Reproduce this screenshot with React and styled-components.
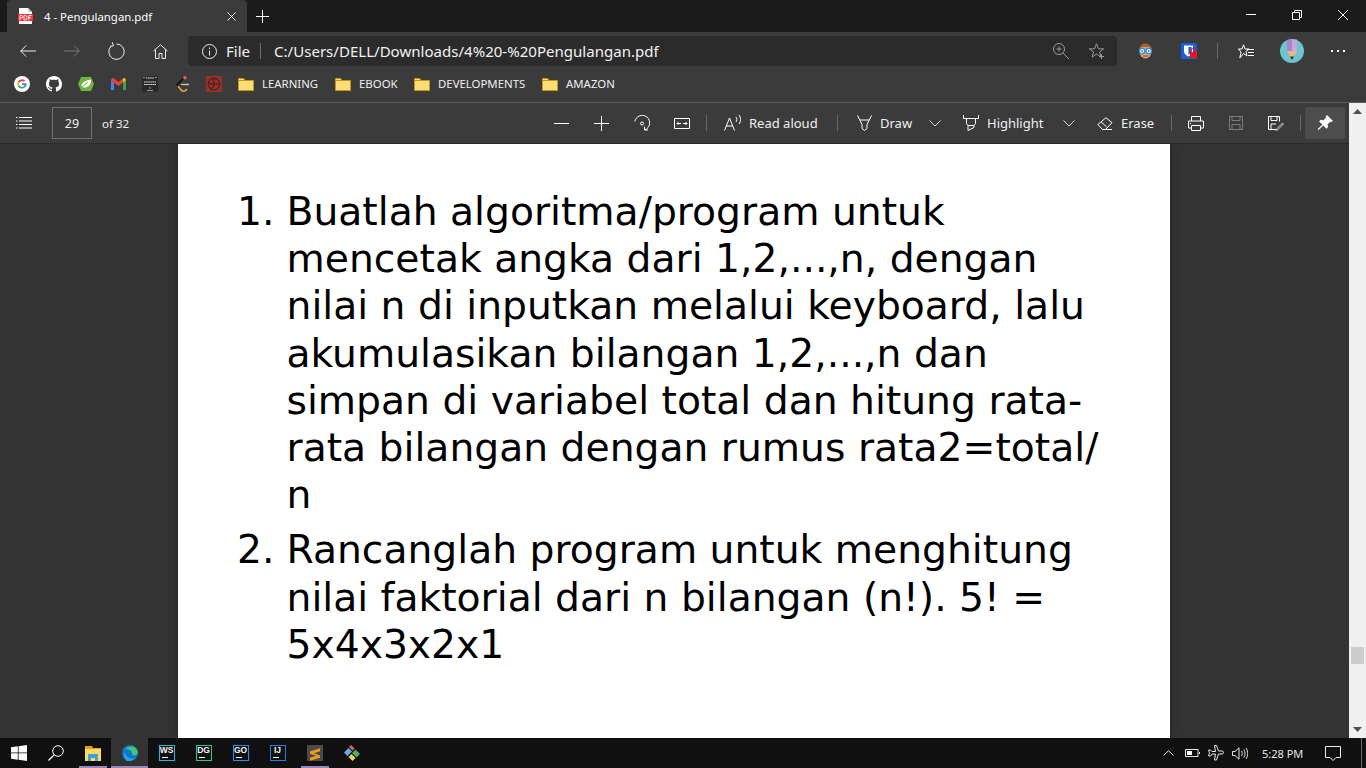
import React from "react"
import styled, { createGlobalStyle } from "styled-components"

const GlobalStyle = createGlobalStyle`
  html, body {
    margin: 0;
    padding: 0;
    height: 100%;
    overflow: hidden;
    background: #333;
  }
  * { box-sizing: border-box; }
`

const Screen = styled.div`
  width: 1366px;
  height: 768px;
  display: flex;
  flex-direction: column;
  overflow: hidden;
  font-family: "Noto Sans", "Open Sans", sans-serif;
  color: #fff;
`

const Glyph = styled.svg`
  display: block;
  flex: none;
  fill: none;
  stroke: ${props => props.$stroke || "#fff"};
  stroke-width: 1;
`

/* title strip */
const TitleBar = styled.div`
  height: 32px;
  flex: none;
  display: flex;
  align-items: stretch;
  padding-left: 7px;
  background: #1b1b1b;
`
const Tab = styled.div`
  width: 240px;
  display: flex;
  align-items: center;
  padding-left: 11px;
  background: #3b3b3b;
  border-radius: 4px 4px 0 0;
  font-size: 11.4px;
`
const TabTitle = styled.span`
  margin-left: 11px;
  flex: 1;
  white-space: nowrap;
`
const TabClose = styled.div`
  width: 32px;
  display: flex;
  justify-content: center;
`
const NewTab = styled.div`
  width: 30px;
  display: flex;
  align-items: center;
  justify-content: center;
`
const WindowControls = styled.div`
  margin-left: auto;
  display: flex;
  height: 29px;
`
const WindowButton = styled.div`
  width: 46px;
  display: flex;
  align-items: center;
  justify-content: center;
`

/* navigation row */
const NavBar = styled.div`
  height: 38px;
  flex: none;
  display: flex;
  align-items: center;
  padding: 0 6px;
  background: #3b3b3b;
`
const NavButton = styled.div`
  width: ${props => props.$w || 44}px;
  height: 30px;
  flex: none;
  display: flex;
  align-items: center;
  justify-content: center;
`
const AddressBar = styled.div`
  flex: 1;
  height: 30px;
  margin: 0 6px;
  display: flex;
  align-items: center;
  padding-left: 14px;
  background: #2b2b2b;
  border-radius: 4px;
  font-size: 15.05px;
  white-space: nowrap;
`
const AddressScheme = styled.span`
  margin-left: 9px;
  color: #f2f2f2;
`
const AddressDivider = styled.span`
  width: 1px;
  height: 16px;
  margin: 0 13px 0 10px;
  background: #6d6d6d;
`
const AddressUrl = styled.span`
  flex: 1;
  color: #f2f2f2;
`
const AddressAction = styled.div`
  width: 36px;
  display: flex;
  justify-content: center;
  &:last-child { margin-right: 2px; }
`
const NavDivider = styled.span`
  width: 1px;
  height: 16px;
  margin: 0 6px;
  background: #666;
  flex: none;
`

/* bookmarks */
const BookmarkBar = styled.div`
  height: 32px;
  flex: none;
  display: flex;
  align-items: center;
  padding: 0 0 4px 6px;
  background: #3b3b3b;
`
const BookmarkIcon = styled.div`
  width: 32px;
  display: flex;
  justify-content: center;
`
const FolderList = styled.div`
  display: flex;
  margin-left: 8px;
`
const BookmarkFolder = styled.div`
  width: ${props => props.$w}px;
  display: flex;
  align-items: center;
  gap: 8px;
  font-size: 11.4px;
  line-height: 13px;
  color: #f0f0f0;
  white-space: nowrap;
`
const FolderName = styled.span`
  margin-top: -1px;
`

/* everything under the bookmarks */
const Workspace = styled.div`
  flex: 1;
  min-height: 0;
  display: flex;
  border-top: 1px solid #5e5e5e;
`
const ReaderColumn = styled.div`
  flex: 1;
  min-width: 0;
  display: flex;
  flex-direction: column;
`
const PdfToolbar = styled.div`
  height: 41px;
  flex: none;
  display: flex;
  align-items: center;
  padding: 0 4px;
  background: #3b3b3b;
  border-bottom: 1px solid #2c2c2c;
  font-size: 13px;
  color: #f0f0f0;
  white-space: nowrap;
`
const ToolButton = styled.div`
  width: 40px;
  height: 32px;
  flex: none;
  display: flex;
  align-items: center;
  justify-content: center;
  border-radius: 2px;
  background: ${props => (props.$active ? "#4d4d4d" : "transparent")};
`
const PageInput = styled.div`
  width: 40px;
  height: 32px;
  margin-left: 8px;
  display: flex;
  align-items: center;
  justify-content: center;
  border: 1px solid #6f6f6f;
  font-size: 12.5px;
`
const PageCount = styled.span`
  margin-left: 10px;
  font-size: 11.5px;
`
const ToolGroup = styled.div`
  margin-left: auto;
  display: flex;
  align-items: center;
`
const ToolDivider = styled.span`
  width: 1px;
  height: 16px;
  margin: 0 4px;
  background: #666;
  flex: none;
`
const TextTool = styled.div`
  width: ${props => props.$w}px;
  height: 32px;
  flex: none;
  display: flex;
  align-items: center;
  padding-left: ${props => props.$pad}px;
  gap: 4px;
`
const ToolIconBox = styled.div`
  width: 24px;
  display: flex;
  justify-content: center;
`

const Viewer = styled.main`
  flex: 1;
  min-height: 0;
  overflow: hidden;
  display: flex;
  justify-content: center;
  background: #333;
`
const Page = styled.article`
  width: 992px;
  margin-right: 1px;
  padding: 44px 60px 0 59px;
  background: #fff;
  box-shadow: 0 0 9px rgba(0, 0, 0, 0.35);
  color: #000;
  font-family: "DejaVu Sans", sans-serif;
  font-size: 39.25px;
  line-height: 47.2px;
`
const Question = styled.div`
  display: flex;
  margin-bottom: 8px;
`
const QuestionNumber = styled.span`
  width: 49.5px;
  flex: none;
`
const Line = styled.div`
  white-space: nowrap;
`

const ScrollBar = styled.div`
  width: 17px;
  flex: none;
  display: flex;
  flex-direction: column;
  align-items: center;
  background: #f0f0f0;
`
const ScrollArrow = styled.div`
  width: 17px;
  height: 17px;
  flex: none;
  display: flex;
  align-items: center;
  justify-content: center;
`
const ScrollTrack = styled.div`
  flex: 1;
`
const ScrollThumb = styled.div`
  width: 13px;
  height: 17px;
  margin-top: ${props => props.$top}px;
  background: #cdcdcd;
`

/* windows taskbar */
const TaskBar = styled.footer`
  height: 30px;
  flex: none;
  display: flex;
  align-items: stretch;
  background: #101010;
`
const TaskCell = styled.div`
  position: relative;
  width: 37px;
  display: flex;
  align-items: center;
  justify-content: center;
  background: ${props => (props.$active ? "#333" : "transparent")};
  &::after {
    content: "";
    display: ${props => (props.$open ? "block" : "none")};
    position: absolute;
    left: ${props => (props.$active ? 0 : 5)}px;
    right: ${props => (props.$active ? 0 : 4)}px;
    bottom: 0;
    height: 2px;
    background: #9a86b4;
  }
`
const JetBadge = styled.div`
  width: 16px;
  height: 16px;
  border: 1px solid ${props => props.$color};
  background: #111;
  font-family: "Liberation Sans", sans-serif;
  font-size: 8.5px;
  font-weight: 700;
  line-height: 9px;
  text-align: center;
  color: #f4f4f4;
  &::after {
    content: "";
    display: block;
    width: 6px;
    height: 1px;
    margin: 2px 0 0 2px;
    background: #fff;
  }
`
const Tray = styled.div`
  margin-left: auto;
  display: flex;
  align-items: center;
`
const TrayIcon = styled.div`
  width: 24px;
  display: flex;
  justify-content: center;
`
const Clock = styled.span`
  width: 41px;
  margin: 0 10px;
  font-size: 11px;
  color: #e6e6e6;
  white-space: nowrap;
`
const Notify = styled.div`
  width: 40px;
  display: flex;
  justify-content: center;
`
const ShowDesktop = styled.div`
  width: 13px;
  height: 100%;
  &::after {
    content: "";
    display: block;
    width: 1px;
    height: 100%;
    margin-left: 8px;
    background: #6b6b6b;
  }
`

const Folder = () => (
  <Glyph width="16" height="13" viewBox="0 0 16 13">
    <path d="M.5 2.500V.5h5l1.500 2h8.500v10H.5z" fill="#ffdc7a" stroke="#c8950f" />
    <path d="M1 2.500h6" stroke="#c8950f" />
  </Glyph>
)

const Chevron = () => (
  <Glyph width="12" height="7" viewBox="0 0 12 7" $stroke="#d8d8d8">
    <path d="M.5.5 6 6 11.500.5" />
  </Glyph>
)

const folders = [
  { name: "LEARNING", w: 97 },
  { name: "EBOOK", w: 79 },
  { name: "DEVELOPMENTS", w: 128 },
  { name: "AMAZON", w: 90 },
]

const questions = [
  {
    n: "1.",
    lines: [
      "Buatlah algoritma/program untuk",
      "mencetak angka dari 1,2,...,n, dengan",
      "nilai n di inputkan melalui keyboard, lalu",
      "akumulasikan bilangan 1,2,...,n dan",
      "simpan di variabel total dan hitung rata-",
      "rata bilangan dengan rumus rata2=total/",
      "n",
    ],
  },
  {
    n: "2.",
    lines: [
      "Rancanglah program untuk menghitung",
      "nilai faktorial dari n bilangan (n!). 5! =",
      "5x4x3x2x1",
    ],
  },
]

const jetApps = [
  { label: "WS", color: "#22b8e6" },
  { label: "DG", color: "#22c88f" },
  { label: "GO", color: "#1e90ff" },
  { label: "IJ", color: "#1e7fe8" },
]

const App = () => (
  <Screen>
    <GlobalStyle />
    <TitleBar>
      <Tab>
        <Glyph width="15" height="16" viewBox="0 0 15 16">
          <path d="M1 0h9l4 4v12H1z" fill="#fff" stroke="none" />
          <path d="M10 0v4h4z" fill="#ccc" stroke="none" />
          <rect y="6" width="15" height="7" fill="#e8383b" stroke="none" />
          <path d="M2 12V7.500h1.600a1 1 0 010 2.400H2M6 7.500v4.500h1.200a1.800 2.200 0 000-4.500zM10.800 12V7.500h2.700M10.800 9.600h2.200" stroke="#fff" strokeWidth=".9" />
        </Glyph>
        <TabTitle>4 - Pengulangan.pdf</TabTitle>
        <TabClose>
          <Glyph width="9" height="9" viewBox="0 0 9 9" strokeWidth="1.2">
            <path d="M.5.5l8 8M8.500.5l-8 8" />
          </Glyph>
        </TabClose>
      </Tab>
      <NewTab>
        <Glyph width="13" height="13" viewBox="0 0 13 13">
          <path d="M6.500 0v13M0 6.500h13" />
        </Glyph>
      </NewTab>
      <WindowControls>
        <WindowButton>
          <Glyph width="10" height="1" viewBox="0 0 10 1"><path d="M0 .5h10" /></Glyph>
        </WindowButton>
        <WindowButton>
          <Glyph width="10" height="10" viewBox="0 0 10 10">
            <path d="M.5 2.500h7v7h-7zM2.500 2.500v-2h7v7h-2" />
          </Glyph>
        </WindowButton>
        <WindowButton>
          <Glyph width="10" height="10" viewBox="0 0 10 10"><path d="M0 0l10 10M10 0L0 10" /></Glyph>
        </WindowButton>
      </WindowControls>
    </TitleBar>

    <NavBar>
      <NavButton>
        <Glyph width="16" height="12" viewBox="0 0 16 12" $stroke="#eee"><path d="M16 6H.7M6.200.5.700 6l5.500 5.500" /></Glyph>
      </NavButton>
      <NavButton>
        <Glyph width="16" height="12" viewBox="0 0 16 12" $stroke="#777"><path d="M0 6h15.300M9.800.5 15.300 6l-5.500 5.500" /></Glyph>
      </NavButton>
      <NavButton>
        <Glyph width="17" height="18" viewBox="0 0 17 18" $stroke="#eee">
          <path d="M8.500 2a7.700 7.700 0 1 1-5.600 2.400" />
          <path d="M4.300.3 5.500 3.800M5.500 3.800l-3.500.6" />
        </Glyph>
      </NavButton>
      <NavButton>
        <Glyph width="15" height="15" viewBox="0 0 15 15" $stroke="#eee">
          <path d="M.5 7 7.500.7 14.500 7M2.500 5.500v9h3.500V9.500h3v5h3.500v-9" />
        </Glyph>
      </NavButton>
      <AddressBar>
        <Glyph width="15" height="15" viewBox="0 0 15 15" $stroke="#eee">
          <circle cx="7.500" cy="7.500" r="7" />
          <path d="M7.500 6.500v5M7.500 3.500v1.500" />
        </Glyph>
        <AddressScheme>File</AddressScheme>
        <AddressDivider />
        <AddressUrl>C:/Users/DELL/Downloads/4%20-%20Pengulangan.pdf</AddressUrl>
        <AddressAction>
          <Glyph width="16" height="16" viewBox="0 0 16 16" $stroke="#999">
            <circle cx="6" cy="6" r="5.500" />
            <path d="M3.500 6h5M6 3.500v5M10 10l6 6" />
          </Glyph>
        </AddressAction>
        <AddressAction>
          <Glyph width="16" height="16" viewBox="0 0 16 16" $stroke="#999">
            <path d="M7.500.8l2 5h5.200l-4.200 3.200 1.600 5.200-4.600-3.200-4.400 3.200L4.500 9 .4 5.800h5.200z" />
            <path d="M12.500 11v5M10 13.500h5" />
          </Glyph>
        </AddressAction>
      </AddressBar>
      <NavButton>
        <Glyph width="15" height="16" viewBox="0 0 15 16">
          <ellipse cx="7.500" cy="8.500" rx="6" ry="7" fill="#dba27a" stroke="none" />
          <path d="M1.500 7C1 3 4 .5 7.500.5S14 3 13.500 7L11 4H4z" fill="#a5622c" stroke="none" />
          <circle cx="4.200" cy="8" r="2.700" fill="#f4f8fc" stroke="#2b8de0" strokeWidth="1.300" />
          <circle cx="10.800" cy="8" r="2.700" fill="#f4f8fc" stroke="#2b8de0" strokeWidth="1.300" />
          <circle cx="4.200" cy="8" r=".8" fill="#333" stroke="none" />
          <circle cx="10.800" cy="8" r=".8" fill="#333" stroke="none" />
          <path d="M5 13h5" stroke="#8a4a20" />
        </Glyph>
      </NavButton>
      <NavButton>
        <Glyph width="16" height="16" viewBox="0 0 16 16">
          <rect width="16" height="16" rx="1.500" fill="#175ddc" stroke="none" />
          <path d="M3 2.500h9v6c0 2.500-2.500 4-4.500 5-2-1-4.500-2.500-4.500-5z" fill="#fff" stroke="none" />
          <path d="M7.500 4h3v4.500c0 1.500-1.500 2.500-3 3.300z" fill="#175ddc" stroke="none" />
          <path d="M10 9V7.500a2 2 0 014 0V9" stroke="#f01422" strokeWidth="1.200" />
          <rect x="9" y="9" width="7" height="6" fill="#f01422" stroke="none" />
        </Glyph>
      </NavButton>
      <NavDivider />
      <NavButton>
        <Glyph width="16" height="15" viewBox="0 0 16 15">
          <path d="M5.500.8 7 5H11L8 7.500 9 12 5.500 9.500 1.800 14 3 8 .3 5h3.700z" />
          <path d="M9 5.500h7M10 8.500h6M10 11.500h6" />
        </Glyph>
      </NavButton>
      <NavButton $w={48}>
        <Glyph width="24" height="24" viewBox="0 0 24 24">
          <circle cx="12" cy="12" r="12" fill="#6cc5cf" stroke="none" />
          <path d="M7 .8h5V12H7z" fill="#a886c8" stroke="none" />
          <path d="M12 .5h5V12h-5z" fill="#c5a8dc" stroke="none" />
          <path d="M7 12h10l-5 9z" fill="#e8b58c" stroke="none" />
          <path d="M10 17.500h4l-2 3.500z" fill="#33312f" stroke="none" />
        </Glyph>
      </NavButton>
      <NavButton>
        <Glyph width="14" height="2" viewBox="0 0 14 2">
          <path d="M0 0h2v2H0zM6 0h2v2H6zM12 0h2v2h-2z" fill="#fff" stroke="none" />
        </Glyph>
      </NavButton>
    </NavBar>

    <BookmarkBar>
      <BookmarkIcon>
        <Glyph width="16" height="16" viewBox="0 0 16 16">
          <circle cx="8" cy="8" r="8" fill="#fff" stroke="none" />
          <path d="M8 3.200a4.800 4.800 0 013.200 1.200L9.900 5.700A3 3 0 005.200 7L3.800 5.800A4.800 4.800 0 018 3.200z" fill="#ea4335" stroke="none" />
          <path d="M3.800 5.800 5.200 7a3 3 0 000 2L3.800 10.200a4.800 4.800 0 010-4.400z" fill="#fbbc05" stroke="none" />
          <path d="M3.800 10.200 5.200 9a3 3 0 004.400 1.500l1.300 1.100A4.800 4.800 0 013.800 10.200z" fill="#34a853" stroke="none" />
          <path d="M8 7.200h4.600c.3 1.700-.3 3.300-1.700 4.400L9.600 10.500c.5-.4.800-.8 1-1.500H8z" fill="#4285f4" stroke="none" />
        </Glyph>
      </BookmarkIcon>
      <BookmarkIcon>
        <Glyph width="16" height="16" viewBox="0 0 16 16">
          <path fill="#fff" stroke="none" d="M8 0C3.580 0 0 3.580 0 8c0 3.540 2.290 6.530 5.470 7.590.4.070.55-.17.55-.38 0-.19-.01-.82-.01-1.490-2.010.37-2.530-.49-2.690-.94-.09-.23-.48-.94-.82-1.130-.28-.15-.68-.52-.01-.53.63-.01 1.080.58 1.230.82.720 1.210 1.870.870 2.330.660.070-.520.280-.870.510-1.070-1.780-.2-3.640-.890-3.640-3.950 0-.870.310-1.590.820-2.150-.080-.2-.360-1.020.080-2.120 0 0 .670-.210 2.200.820.640-.180 1.320-.270 2-.270s1.360.090 2 .270c1.530-1.040 2.200-.820 2.200-.820.440 1.100.160 1.920.080 2.120.510.560.820 1.270.820 2.150 0 3.070-1.870 3.750-3.650 3.950.290.250.540.730.540 1.480 0 1.070-.010 1.930-.010 2.200 0 .210.150.460.550.380A8.013 8.013 0 0016 8c0-4.420-3.580-8-8-8z" />
        </Glyph>
      </BookmarkIcon>
      <BookmarkIcon>
        <Glyph width="16" height="16" viewBox="0 0 16 16">
          <path d="M3 1h10l3 7-3 7H3L0 8z" fill="#6db33f" stroke="none" />
          <path d="M13 3.500c.5 4-1.500 7.500-6 8-1.500.1-3-.5-3.500-1 0-3.500 3-6 9.500-7z" fill="#fff" stroke="none" />
          <path d="M4 11 10 6" stroke="#6db33f" />
        </Glyph>
      </BookmarkIcon>
      <BookmarkIcon>
        <Glyph width="15" height="12" viewBox="0 0 15 12">
          <path d="M0 2.500V12h3V4.500z" fill="#4285f4" stroke="none" />
          <path d="M12 4.500V12h3V2.500z" fill="#34a853" stroke="none" />
          <path d="M0 2.500C0 .5 2 -.5 3 .5L7.500 4 12 .5l0 4L7.500 8 0 2.500z" fill="#ea4335" stroke="none" />
          <path d="M12 .5c1-1 3 0 3 2l-3 2z" fill="#fbbc05" stroke="none" />
        </Glyph>
      </BookmarkIcon>
      <BookmarkIcon>
        <Glyph width="16" height="16" viewBox="0 0 16 16">
          <rect width="16" height="16" fill="#2a2a2a" stroke="none" />
          <path d="M4 2h8M2 2v-1M14 2v-1M2 6h12M2 8.500h12" stroke="#dedede" strokeWidth="1.200" strokeDasharray="1.600 .5" />
          <path d="M7 12h2M5 14.500h6" stroke="#999" />
        </Glyph>
      </BookmarkIcon>
      <BookmarkIcon>
        <Glyph width="14" height="16" viewBox="0 0 14 16">
          <circle cx="10" cy="1.800" r="1.700" fill="#ef5a4a" stroke="none" />
          <path d="M8 3 2 8.500l2.500 3" stroke="#0c0c0c" strokeWidth="1.600" />
          <path d="M3 10l4 5h3l2-2" stroke="#f0a53a" strokeWidth="1.600" />
          <path d="M6 8.500h8" stroke="#c4c4c4" strokeWidth="1.400" />
        </Glyph>
      </BookmarkIcon>
      <BookmarkIcon>
        <Glyph width="16" height="16" viewBox="0 0 16 16">
          <rect width="16" height="16" fill="#96302a" stroke="none" />
          <circle cx="8" cy="8" r="5.800" stroke="#54201d" strokeWidth="1.200" />
          <path d="M8 8C6.500 6 7 3.500 9.500 2.500M8 8c2.300-1 4.700 0 5.500 2.300M8 8c.3 2.500-1.500 4.500-4 4.800M8 8C5.800 9 3.300 8 2.500 5.700" stroke="#54201d" strokeWidth="1.200" />
        </Glyph>
      </BookmarkIcon>
      <FolderList>
        {folders.map(folder => (
          <BookmarkFolder key={folder.name} $w={folder.w}>
            <Folder />
            <FolderName>{folder.name}</FolderName>
          </BookmarkFolder>
        ))}
      </FolderList>
    </BookmarkBar>

    <Workspace>
      <ReaderColumn>
        <PdfToolbar>
          <ToolButton>
            <Glyph width="16" height="12" viewBox="0 0 16 12">
              <path d="M0 .5h1.500M0 4h1.500M0 7.500h1.500M0 11h1.500M3 .5h13M3 4h13M3 7.500h13M3 11h13" />
            </Glyph>
          </ToolButton>
          <PageInput>29</PageInput>
          <PageCount>of 32</PageCount>
          <ToolGroup>
            <ToolButton>
              <Glyph width="16" height="1" viewBox="0 0 16 1"><path d="M0 .5h15" /></Glyph>
            </ToolButton>
            <ToolButton>
              <Glyph width="16" height="15" viewBox="0 0 16 15"><path d="M7.500 0v15M0 7.500h15" /></Glyph>
            </ToolButton>
            <ToolButton>
              <Glyph width="16" height="16" viewBox="0 0 16 16">
                <path d="M.8 6.500A7.500 7.500 0 1 1 11 14.800M10.500 11.500v3.500h3.500" />
                <circle cx="8" cy="8.500" r="1.500" />
              </Glyph>
            </ToolButton>
            <ToolButton>
              <Glyph width="16" height="11" viewBox="0 0 16 11">
                <path d="M.5.500h15v10H.5zM3 5.500h4M9 5.500h4" />
                <path d="M4.500 4 3 5.500 4.500 7M11.500 4 13 5.500 11.500 7" />
              </Glyph>
            </ToolButton>
            <ToolDivider />
            <TextTool $w={122} $pad={10}>
              <ToolIconBox>
                <Glyph width="18" height="16" viewBox="0 0 18 16">
                  <path d="M.5 15.500 5.500 3l5 12.500M2.300 11h6.500M12 2c1 1.500 1 3.500 0 5M15 0c2 2.500 2 6.500 0 9" />
                </Glyph>
              </ToolIconBox>
              <span>Read aloud</span>
            </TextTool>
            <ToolDivider />
            <TextTool $w={73} $pad={10}>
              <ToolIconBox>
                <Glyph width="15" height="16" viewBox="0 0 15 16">
                  <path d="M.5.500 5 9.500v4l2.500 2 2.500-2v-4L14.500.500M3 5h9" />
                </Glyph>
              </ToolIconBox>
              <span>Draw</span>
            </TextTool>
            <ToolButton><Chevron /></ToolButton>
            <TextTool $w={94} $pad={4}>
              <ToolIconBox>
                <Glyph width="16" height="16" viewBox="0 0 16 16">
                  <path d="M.5 0v3.500h15V0M3.500 3.500v5l1.500 2v5l6-3v-2l1.500-2v-5M5 10.500h6" />
                </Glyph>
              </ToolIconBox>
              <span>Highlight</span>
            </TextTool>
            <ToolButton><Chevron /></ToolButton>
            <TextTool $w={78} $pad={4}>
              <ToolIconBox>
                <Glyph width="16" height="13" viewBox="0 0 16 13">
                  <path d="M.8 7.500 9 .7l6 5-6.500 6.800H5.500zM4 4.800l5.500 5M5.500 12.500H15" />
                </Glyph>
              </ToolIconBox>
              <span>Erase</span>
            </TextTool>
            <ToolDivider />
            <ToolButton>
              <Glyph width="16" height="15" viewBox="0 0 16 15">
                <path d="M3.500 5V.5h9V5M3.500 12H.5V5h15v7h-3M3.500 9.500h9v5h-9zM2 7.500h1" />
              </Glyph>
            </ToolButton>
            <ToolButton>
              <Glyph width="14" height="14" viewBox="0 0 14 14" $stroke="#7c7c7c">
                <path d="M.5.500h13v13H.5zM3 .5v4h8v-4M3 13.500v-5h8v5" />
              </Glyph>
            </ToolButton>
            <ToolButton>
              <Glyph width="16" height="15" viewBox="0 0 16 15">
                <path d="M8 13.500H.5V.5h11v5M3 .5v4h6v-4M3 13v-5h5" />
                <path d="M9.500 14 15.500 8l-1-1-6 6-.5 1.500z" stroke="#ccc" />
              </Glyph>
            </ToolButton>
            <ToolDivider />
            <ToolButton $active>
              <Glyph width="16" height="16" viewBox="0 0 16 16">
                <path d="M10 .5 15.500 6l-1.200.8-1-.5-3 3 .2 3-1.200 1L6.200 10 1.500 14.800l-.5-.5L5.800 9.600 2.500 6.500l1-1.200 3 .2 3-3-.5-1z" fill="#fff" stroke="#fff" strokeWidth=".8" />
              </Glyph>
            </ToolButton>
          </ToolGroup>
        </PdfToolbar>
        <Viewer>
          <Page>
            {questions.map(q => (
              <Question key={q.n}>
                <QuestionNumber>{q.n}</QuestionNumber>
                <div>
                  {q.lines.map(line => (
                    <Line key={line}>{line}</Line>
                  ))}
                </div>
              </Question>
            ))}
          </Page>
        </Viewer>
      </ReaderColumn>
      <ScrollBar>
        <ScrollArrow>
          <Glyph width="9" height="5" viewBox="0 0 9 5">
            <path d="M4.500 0 9 5H0z" fill="#505050" stroke="none" />
          </Glyph>
        </ScrollArrow>
        <ScrollTrack>
          <ScrollThumb $top={527} />
        </ScrollTrack>
        <ScrollArrow>
          <Glyph width="9" height="5" viewBox="0 0 9 5">
            <path d="M0 0h9L4.500 5z" fill="#505050" stroke="none" />
          </Glyph>
        </ScrollArrow>
      </ScrollBar>
    </Workspace>

    <TaskBar>
      <TaskCell>
        <Glyph width="16" height="16" viewBox="0 0 16 16">
          <path d="M0 2.300 6.800 1.300V7.500H0zM7.600 1.200 16 0V7.500H7.600zM0 8.300H6.800V14.700L0 13.700zM7.600 8.300H16V16L7.600 14.800z" fill="#fff" stroke="none" />
        </Glyph>
      </TaskCell>
      <TaskCell>
        <Glyph width="16" height="16" viewBox="0 0 16 16">
          <circle cx="10" cy="6" r="5.300" />
          <path d="M6.200 9.800.5 15.500" strokeWidth="1.300" />
        </Glyph>
      </TaskCell>
      <TaskCell $open>
        <Glyph width="16" height="16" viewBox="0 0 16 16">
          <path d="M0 1h7l1 2h8v3H0z" fill="#e0a11a" stroke="none" />
          <path d="M0 4h16v12H0z" fill="#ffd866" stroke="none" />
          <path d="M3 9h10v7h-3v-3H6v3H3z" fill="#3aa3d8" stroke="none" />
        </Glyph>
      </TaskCell>
      <TaskCell $open $active>
        <Glyph width="16" height="16" viewBox="0 0 16 16">
          <circle cx="8" cy="8" r="8" fill="#1173c9" stroke="none" />
          <path d="M3 5c2-4 8-4.500 11-1.500 2 2 2.500 5 .5 6.500-2 1-4.500.5-4.500-1.500C10 6 6 3 3 5z" fill="#3ec77a" stroke="none" />
          <path d="M5 16c-3-2-4-6-2-9 0 3 3 6 6 6.500 2 .3 3.500 0 4-1-1 2-5 5-8 3.500z" fill="#27a5e8" stroke="none" />
        </Glyph>
      </TaskCell>
      {jetApps.map(app => (
        <TaskCell key={app.label}>
          <JetBadge $color={app.color}>{app.label}</JetBadge>
        </TaskCell>
      ))}
      <TaskCell $open>
        <Glyph width="16" height="16" viewBox="0 0 16 16">
          <rect width="16" height="16" fill="#4a4a4a" stroke="none" />
          <path d="M3 6.500 13 3.300v3L7 8.200l6 2.200v2.300L3 15.800v-3l6-2L3 8.800z" fill="#f09a1a" stroke="none" />
        </Glyph>
      </TaskCell>
      <TaskCell>
        <Glyph width="16" height="16" viewBox="0 0 16 16">
          <path d="M5 2 7 0l3.500 3.500-2 2z" fill="#e8675c" stroke="none" />
          <path d="M4.500 3 0 7.500 3.500 11 8 6.500z" fill="#6aaaf0" stroke="none" />
          <path d="M11.500 4.500 16 9l-3.500 3.500L8 8z" fill="#58a860" stroke="none" />
          <path d="M4.500 12 7.500 9l4 4-3 3z" fill="#f0d070" stroke="none" />
        </Glyph>
      </TaskCell>
      <Tray>
        <TrayIcon>
          <Glyph width="11" height="6" viewBox="0 0 11 6" $stroke="#e6e6e6" strokeWidth="1.100">
            <path d="M.5 5.500 5.500.7l5 4.800" />
          </Glyph>
        </TrayIcon>
        <TrayIcon>
          <Glyph width="15" height="8" viewBox="0 0 15 8" $stroke="#e6e6e6">
            <path d="M.5.500h12.500v7H.5z" />
            <path d="M2 2h5v4H2z" fill="#fff" stroke="none" />
            <path d="M14 3v2h1V3z" fill="#e6e6e6" stroke="none" />
          </Glyph>
        </TrayIcon>
        <TrayIcon>
          <Glyph width="16" height="16" viewBox="0 0 16 16" $stroke="#e6e6e6">
            <path d="M6.500.5h2L10.500 6H14c2 0 2 3 0 3H10.500l-2 6h-2l1-6H4L2.500 11H.5l1-3-1-3h2L4 6.500h3.500z" />
          </Glyph>
        </TrayIcon>
        <TrayIcon>
          <Glyph width="16" height="13" viewBox="0 0 16 13" $stroke="#e6e6e6">
            <path d="M.5 4.500h2.500L7 .8v11.400L3 8.500H.5zM9.500 4c1 1.500 1 3.500 0 5M11.800 2.500c1.700 2.500 1.700 5.500 0 8M14 1c2.300 3.500 2.300 7.500 0 11" />
          </Glyph>
        </TrayIcon>
        <Clock>5:28 PM</Clock>
        <Notify>
          <Glyph width="16" height="15" viewBox="0 0 16 15" $stroke="#eee">
            <path d="M.5.500h15v11h-4.500L8 14.500 5 11.500H.5z" />
          </Glyph>
        </Notify>
        <ShowDesktop />
      </Tray>
    </TaskBar>
  </Screen>
)

export default App
